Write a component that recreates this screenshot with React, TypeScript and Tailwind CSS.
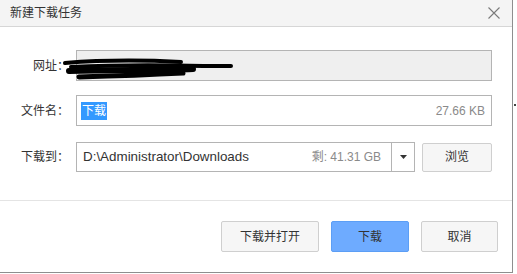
const font = { fontFamily: '"Liberation Sans", "Noto Sans CJK SC", sans-serif' };

function Scribble() {
  return (
    <svg width="180" height="30" viewBox="0 0 180 30" className="absolute left-[-14px] top-[3px]">
      <path d="M2 9 C40 6 80 6 118 8" stroke="#000" strokeWidth="4" fill="none" strokeLinecap="round" />
      <path d="M8 13 C50 11 100 11 140 12 L168 12" stroke="#000" strokeWidth="4" fill="none" strokeLinecap="round" />
      <path d="M6 17 C50 16 100 16 130 15" stroke="#000" strokeWidth="6" fill="none" strokeLinecap="round" />
      <path d="M16 23 C50 22 80 21 120 19" stroke="#000" strokeWidth="5" fill="none" strokeLinecap="round" />
    </svg>
  );
}

function Label({ children }: { children: string }) {
  return (
    <div className="w-[76px] shrink-0 pr-[7px] text-right text-[12px] text-[#333]">{children}</div>
  );
}

export default function App() {
  return (
    <div className="relative h-[274px] w-[517px] overflow-hidden bg-white" style={font}>
      <div className="flex h-[273px] w-[513px] flex-col border-r border-b border-[#8e8e8e]">
        <div className="flex h-[27px] shrink-0 items-center justify-between border-b border-[#d6d6d6] bg-[#f4f4f4] pl-[10px] pr-[12px]">
          <span className="text-[12px] text-[#333]">新建下载任务</span>
          <svg width="12" height="12" viewBox="0 0 12 12">
            <path d="M0.5 0.5 L11.5 11.5 M11.5 0.5 L0.5 11.5" stroke="#7a7a7a" strokeWidth="1.1" />
          </svg>
        </div>

        <div className="flex flex-col pt-[23px] pr-[20px]">
          <div className="flex h-[31px] items-center">
            <Label>网址：</Label>
            <div className="relative h-full flex-1 border border-[#b4b4b4] bg-[#efefef]">
              <Scribble />
            </div>
          </div>

          <div className="mt-[14px] flex h-[31px] items-center">
            <Label>文件名：</Label>
            <div className="flex h-full flex-1 items-center justify-between border border-[#b4b4b4] bg-white pl-[4px] pr-[6px]">
              <span className="bg-[#3399ff] px-px text-[12px] leading-[18px] text-white">下载</span>
              <span className="text-[12px] text-[#8a8a8a]">27.66 KB</span>
            </div>
          </div>

          <div className="mt-[16px] flex h-[30px] items-center">
            <Label>下载到：</Label>
            <div className="flex h-full w-[339px] border border-[#b4b4b4] bg-white">
              <div className="flex flex-1 items-center justify-between pl-[6px] pr-[10px]">
                <span className="text-[13.4px] text-[#333]">D:\Administrator\Downloads</span>
                <span className="text-[12px] text-[#8a8a8a]">剩: 41.31 GB</span>
              </div>
              <div className="flex w-[23px] items-center justify-center border-l border-[#b4b4b4]">
                <svg width="7" height="4" viewBox="0 0 7 4">
                  <path d="M0 0 H7 L3.5 4 Z" fill="#333" />
                </svg>
              </div>
            </div>
            <button className="ml-[7px] flex h-[29px] w-[70px] items-center justify-center rounded-[2px] border border-[#cfcfcf] bg-[#f6f6f6] text-[12px] text-[#333]">
              浏览
            </button>
          </div>
        </div>

        <div className="mt-[28px] border-t border-[#e4e4e4]" />

        <div className="flex justify-end gap-[12px] pt-[20px] pr-[14px]">
          <button className="h-[31px] w-[98px] rounded-[2px] border border-[#cfcfcf] bg-[#f6f6f6] text-[12px] text-[#333]">
            下载并打开
          </button>
          <button className="h-[31px] w-[78px] rounded-[2px] border border-[#5c9ef5] bg-[#6eabff] text-[12px] text-[#333]">
            下载
          </button>
          <button className="h-[31px] w-[77px] rounded-[2px] border border-[#cfcfcf] bg-[#f6f6f6] text-[12px] text-[#333]">
            取消
          </button>
        </div>
      </div>
      <div className="absolute left-[514px] top-[104px] h-[2px] w-[2px] bg-[#444]" />
    </div>
  );
}
